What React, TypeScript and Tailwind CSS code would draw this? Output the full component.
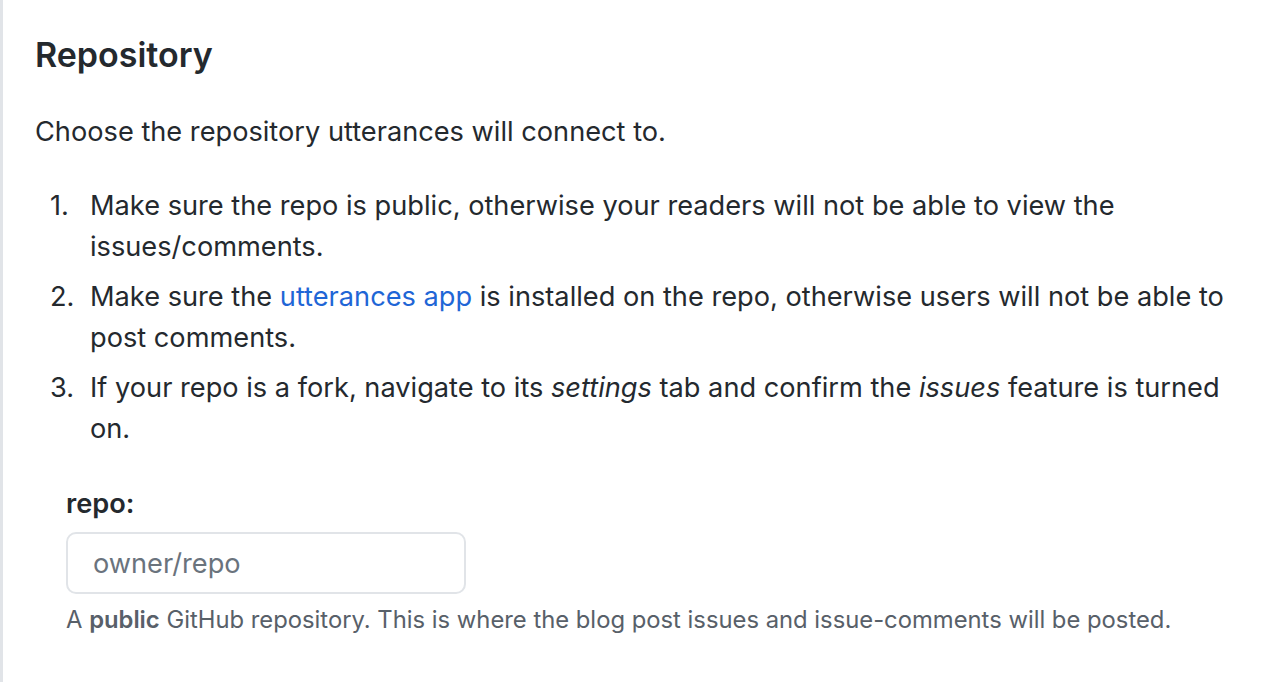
const items: React.ReactNode[] = [
  <>Make sure the repo is public, otherwise your readers will not be able to view the issues/comments.</>,
  <>
    Make sure the <a className="text-[#1f66d6]" href="#">utterances app</a> is installed on the repo, otherwise users will
    not be able to post comments.
  </>,
  <>
    If your repo is a fork, navigate to its <em>settings</em> tab and confirm the <em>issues</em> feature is turned on.
  </>,
];

export default function App() {
  return (
    <div
      className="min-h-[682px] border-l-[3px] border-[#e1e4e8] bg-white pl-[32px] pr-[35px] pt-[34px] pb-8 text-[#24292e]"
      style={{ fontFamily: 'Inter, "Liberation Sans", sans-serif' }}
    >
      <h3 className="text-[34px] font-semibold leading-[42px]">Repository</h3>
      <p className="mt-[35px] text-[27.2px] leading-[41px]">Choose the repository utterances will connect to.</p>
      <ol className="mt-[33px] text-[27.2px] leading-[41px]">
        {items.map((c, i) => (
          <li key={i} className={`grid grid-cols-[40px_1fr] pl-[15px] ${i > 0 ? 'mt-[9px]' : ''}`}>
            <span>{i + 1}.</span>
            <span>{c}</span>
          </li>
        ))}
      </ol>
      <div className="ml-[31px] mt-[34px]">
        <label className="block text-[27.2px] font-semibold leading-[41px]">repo:</label>
        <input
          type="text"
          placeholder="owner/repo"
          className="mt-[8px] block h-[62px] w-[400px] rounded-[10px] border-2 border-[#e1e4e8] px-[25px] text-[27.2px] text-[#24292e] outline-none placeholder:text-[#6a737d]"
        />
        <p className="mt-[8px] text-[23.8px] leading-[36px] text-[#586069]">
          A <strong className="font-semibold">public</strong> GitHub repository. This is where the blog post issues and
          issue-comments will be posted.
        </p>
      </div>
    </div>
  );
}
